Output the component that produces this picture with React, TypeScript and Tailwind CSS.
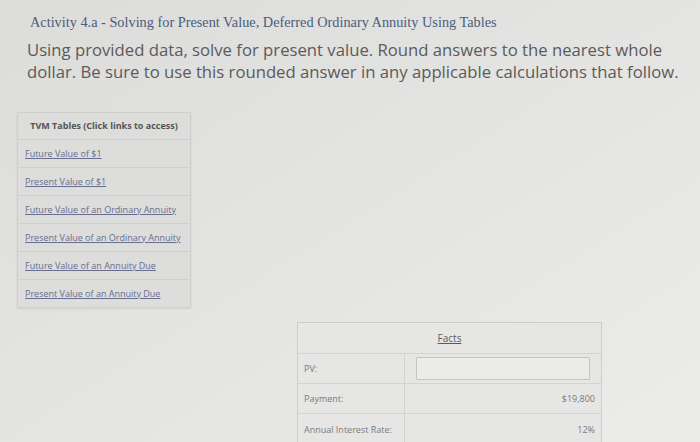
import React from 'react';

const tvmLinks = [
  'Future Value of $1',
  'Present Value of $1',
  'Future Value of an Ordinary Annuity',
  'Present Value of an Ordinary Annuity',
  'Future Value of an Annuity Due',
  'Present Value of an Annuity Due',
];

export default function App() {
  return (
    <div
      className="w-[700px] h-[442px] overflow-hidden bg-linear-to-br from-[#dcdcda] to-[#ececea] relative"
      style={{ fontFamily: '"Open Sans", sans-serif' }}
    >
      <div className="pl-[30px] pt-[13px]">
        <h1
          className="text-[14.3px] leading-[18px] text-[#4d5c7a]"
          style={{ fontFamily: '"Liberation Serif", serif' }}
        >
          Activity 4.a - Solving for Present Value, Deferred Ordinary Annuity Using Tables
        </h1>
      </div>

      <p className="pl-[27px] pr-[10px] mt-[8px] text-[16.7px] leading-[22px] text-[#5b5b5b]">
        Using provided data, solve for present value. Round answers to the nearest whole
        dollar. Be sure to use this rounded answer in any applicable calculations that follow.
      </p>

      {/* TVM tables */}
      <div className="ml-[17px] mt-[29px] w-[174px] border border-[#cfcfcd] bg-[#dddddb] shadow-[0_1px_2px_rgba(0,0,0,0.08)]">
        <div className="h-[26px] flex items-center justify-center text-[9px] font-bold text-[#555]">
          TVM Tables (Click links to access)
        </div>
        {tvmLinks.map((l) => (
          <div key={l} className="h-[28px] flex items-center px-[7px] border-t border-[#d0d0ce]">
            <span className="text-[9px] underline text-[#676d8f]">{l}</span>
          </div>
        ))}
      </div>

      {/* Facts */}
      <div className="absolute left-[297px] top-[322px] w-[305px] border border-[#cdcdcb] bg-[#e6e6e4]">
        <div className="h-[30px] flex items-center justify-center">
          <span className="text-[10px] underline text-[#5b5b5b]">Facts</span>
        </div>
        <div className="flex h-[30px] border-t border-[#d4d4d2]">
          <div className="w-[106px] flex items-center pl-[6px] text-[9px] text-[#7a7a7a]">PV:</div>
          <div className="flex-1 border-l border-[#d4d4d2] flex items-center px-[11px]">
            <div className="h-[23px] w-full border border-[#c4c4c2] bg-[#ebebea] rounded-[1px]" />
          </div>
        </div>
        <div className="flex h-[30px] border-t border-[#d4d4d2]">
          <div className="w-[106px] flex items-center pl-[6px] text-[9px] text-[#7a7a7a]">Payment:</div>
          <div className="flex-1 border-l border-[#d4d4d2] flex items-center justify-end pr-[6px] text-[9px] text-[#7a7a7a]">
            $19,800
          </div>
        </div>
        <div className="flex h-[32px] border-t border-[#d4d4d2]">
          <div className="w-[106px] flex items-center pl-[6px] text-[9px] text-[#7a7a7a]">Annual Interest Rate:</div>
          <div className="flex-1 border-l border-[#d4d4d2] flex items-center justify-end pr-[6px] text-[9px] text-[#7a7a7a]">
            12%
          </div>
        </div>
      </div>
    </div>
  );
}
